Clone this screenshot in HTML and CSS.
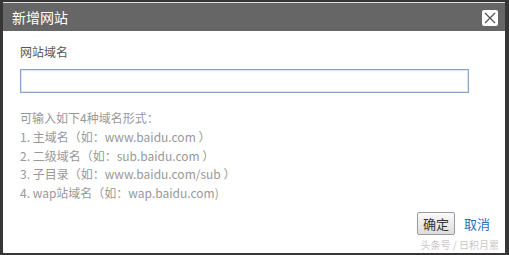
FILE: index.html
```html
<!DOCTYPE html>
<html lang="zh-CN">
<head>
    <meta charset="UTF-8">
    <title>新增网站</title>
    <link rel="stylesheet" href="styles.css">
</head>
<body>
    <div class="dialog">
        <div class="dialog-title">
            <span>新增网站</span>
            <button class="close" title="关闭">
                <svg width="12" height="12" viewBox="0 0 12 12">
                    <path d="M1 1 L11 11 M11 1 L1 11" stroke="#555" stroke-width="1.3" fill="none"/>
                </svg>
            </button>
        </div>
        <div class="dialog-body">
            <div class="label">网站域名</div>
            <input class="domain" type="text">
            <div class="tips">
                <p>可输入如下4种域名形式：</p>
                <p>1. 主域名（如：www.baidu.com ）</p>
                <p>2. 二级域名（如：sub.baidu.com ）</p>
                <p>3. 子目录（如：www.baidu.com/sub ）</p>
                <p>4. wap站域名（如：wap.baidu.com)</p>
            </div>
            <div class="actions">
                <button class="ok">确定</button>
                <a class="cancel" href="#">取消</a>
            </div>
            <div class="mark">头条号 / 日积月累</div>
        </div>
    </div>
</body>
</html>
```

FILE: styles.css
```css
body {
    margin: 0;
    height: 255px;
    padding: 2px 4px 3px 3px;
    box-sizing: border-box;
    background: #363636;
    font-family: "Noto Sans CJK SC", "Noto Sans", sans-serif;
}

.dialog {
    height: 250px;
    background: #fff;
    border-top: 1px solid #ddd;
    display: flex;
    flex-direction: column;
}

.dialog-title {
    height: 28px;
    background: #666;
    color: #fff;
    font-size: 14px;
    display: flex;
    align-items: center;
    justify-content: space-between;
    padding: 0 7px 0 9px;
}

.close {
    width: 16px;
    height: 16px;
    padding: 0;
    border: none;
    border-radius: 2px;
    background: #fff;
    display: flex;
    align-items: center;
    justify-content: center;
    margin-top: 1px;
}

.dialog-body {
    flex: 1;
    padding: 12px 36px 0 17px;
    position: relative;
}

.label {
    font-size: 12px;
    color: #555;
    line-height: 18px;
}

.domain {
    display: block;
    width: 100%;
    height: 24px;
    box-sizing: border-box;
    margin-top: 8px;
    border: 1px solid #8aa3cf;
    box-shadow: inset 0 0 0 1px #dbe4f3;
    outline: none;
    padding: 0 4px;
    font-size: 13px;
}

.tips {
    margin-top: 16px;
    font-size: 12px;
    color: #999;
    line-height: 18.8px;
}

.tips p {
    margin: 0;
}

.actions {
    display: flex;
    justify-content: flex-end;
    align-items: center;
    gap: 9px;
    margin-top: 9px;
    margin-right: -21px;
}

.ok {
    height: 23px;
    padding: 0 5px;
    font-family: inherit;
    font-size: 13px;
    color: #333;
    border: 1px solid #9a9a9a;
    border-radius: 2px;
    background: linear-gradient(#fafafa, #dcdcdc);
}

.cancel {
    font-size: 13px;
    color: #2a6fb8;
    text-decoration: none;
}

.mark {
    position: absolute;
    right: 6px;
    bottom: 2px;
    font-size: 10px;
    line-height: 12px;
    color: #c8c8c8;
}
```
